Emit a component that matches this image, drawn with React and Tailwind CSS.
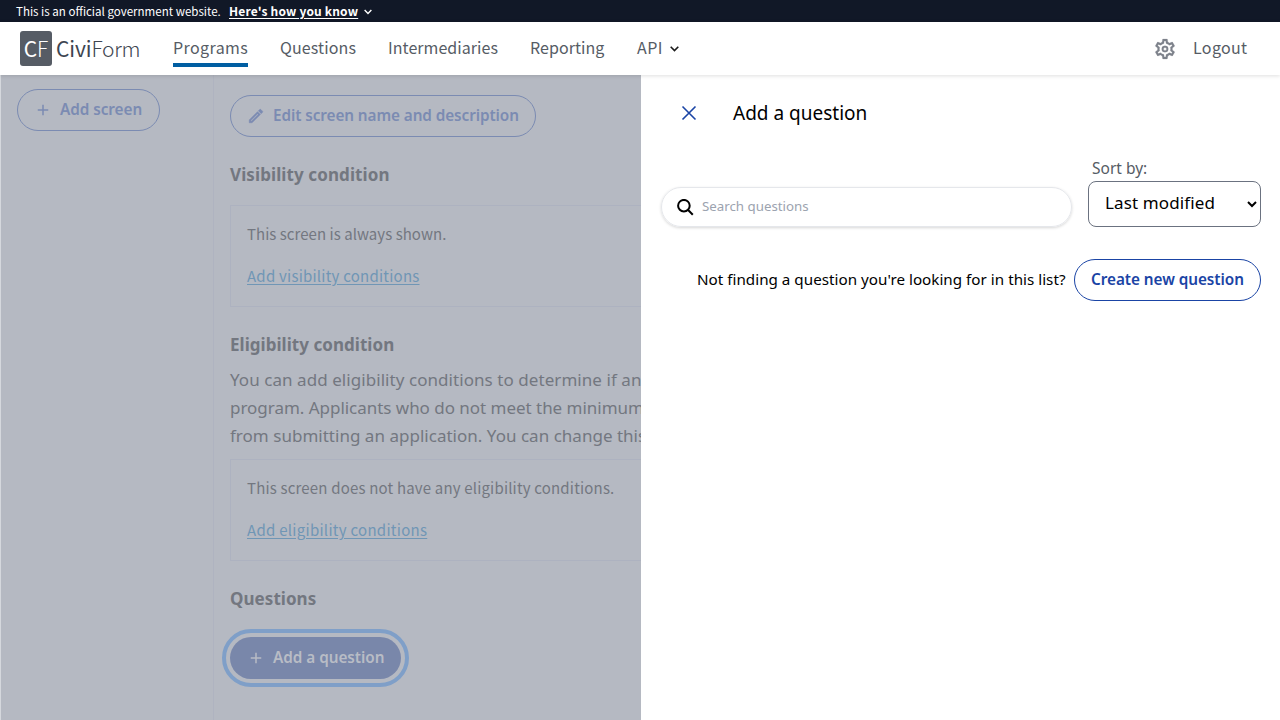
import React from "react";

const source = "font-['Noto_Sans_CJK_SC',sans-serif]";

function Chevron({ className }) {
  return (
    <svg className={className} viewBox="0 0 9 6" fill="none" stroke="currentColor" strokeWidth="1.6">
      <path d="M.7.8 4.5 4.6 8.3.8" />
    </svg>
  );
}

function Plus() {
  return (
    <svg className="h-[18px] w-[18px]" viewBox="0 0 24 24" fill="currentColor">
      <path d="M19 13h-6v6h-2v-6H5v-2h6V5h2v6h6v2z" />
    </svg>
  );
}

function Banner() {
  return (
    <div className={`flex h-[22px] shrink-0 items-center whitespace-nowrap bg-[#111827] pl-4 leading-none text-white ${source}`}>
      <span className="w-[213px] text-[11.56px] leading-[22px]">This is an official government website.</span>
      <a className="w-[129px] text-[12px] leading-[22px] font-bold tracking-[0.17px] underline underline-offset-2">Here's how you know</a>
      <Chevron className="ml-1.5 mt-0.5 h-[6px] w-[8px]" />
    </div>
  );
}

function Header() {
  return (
    <header className={`relative z-10 flex h-[53px] shrink-0 items-center bg-white pl-5 pr-8 text-[16px] whitespace-nowrap text-[#565c65] shadow-[0_1px_4px_rgba(0,0,0,0.13)] ${source}`}>
      <div className="flex h-[35px] w-8 items-center justify-center rounded-[3px] bg-[#565c65] text-[21px] leading-[35px] text-white">
        <span>C</span>
        <span className="font-light">F</span>
      </div>
      <div className="ml-1 flex w-[117px] text-[21px] leading-[35px] text-[#3d4551]">
        <span className="tracking-[-0.1px]">Civi</span>
        <span className="font-light tracking-[-0.3px]">Form</span>
      </div>
      <nav className="flex h-full gap-8 leading-[50px]">
        <a className="relative w-[75px] tracking-[0.4px]">
          Programs
          <span className="absolute bottom-2 left-0 h-1 w-full bg-[#005ea2]" />
        </a>
        <a className="w-[76px] tracking-[0.12px]">Questions</a>
        <a className="w-[110px] tracking-[0.05px]">Intermediaries</a>
        <a className="w-[75px] tracking-[0.05px]">Reporting</a>
        <a className="flex h-[50px] items-center tracking-[0.4px]">
          API
          <Chevron className="mt-[3px] ml-[7px] h-[6px] w-[9px] text-[#1b1b1b]" />
        </a>
      </nav>
      <svg className="ml-auto h-6 w-6" viewBox="0 0 24 24" fill="#7d828b" stroke="#7d828b" strokeWidth="0.2">
        <path d="M19.43 12.98c.04-.32.07-.64.07-.98 0-.34-.03-.66-.07-.98l2.11-1.65c.19-.15.24-.42.12-.64l-2-3.46c-.09-.16-.26-.25-.44-.25-.06 0-.12.01-.17.03l-2.49 1c-.52-.4-1.08-.73-1.69-.98l-.38-2.65C14.46 2.18 14.25 2 14 2h-4c-.25 0-.46.18-.49.42l-.38 2.65c-.61.25-1.17.59-1.69.98l-2.49-1c-.06-.02-.12-.03-.18-.03-.17 0-.34.09-.43.25l-2 3.46c-.13.22-.07.49.12.64l2.11 1.65c-.04.32-.07.65-.07.98 0 .33.03.66.07.98l-2.11 1.65c-.19.15-.24.42-.12.64l2 3.46c.09.16.26.25.44.25.06 0 .12-.01.17-.03l2.49-1c.52.4 1.08.73 1.69.98l.38 2.65c.03.24.24.42.49.42h4c.25 0 .46-.18.49-.42l.38-2.65c.61-.25 1.17-.59 1.69-.98l2.49 1c.06.02.12.03.18.03.17 0 .34-.09.43-.25l2-3.46c.12-.22.07-.49-.12-.64l-2.11-1.65zm-1.98-1.71c.04.31.05.52.05.73 0 .21-.02.43-.05.73l-.14 1.13.89.7 1.08.84-.7 1.21-1.27-.51-1.04-.42-.9.68c-.43.32-.84.56-1.25.73l-1.06.43-.16 1.13-.2 1.35h-1.4l-.19-1.35-.16-1.13-1.06-.43c-.43-.18-.83-.41-1.23-.71l-.91-.7-1.06.43-1.27.51-.7-1.21 1.08-.84.89-.7-.14-1.13c-.03-.31-.05-.54-.05-.74s.02-.43.05-.73l.14-1.13-.89-.7-1.08-.84.7-1.21 1.27.51 1.04.42.9-.68c.43-.32.84-.56 1.25-.73l1.06-.43.16-1.13.2-1.35h1.39l.19 1.35.16 1.13 1.06.43c.43.18.83.41 1.23.71l.91.7 1.06-.43 1.27-.51.7 1.21-1.07.85-.89.7.14 1.13zM12 8.7a3.3 3.3 0 1 0 0 6.6 3.3 3.3 0 0 0 0-6.6zm0 4.8a1.5 1.5 0 1 1 0-3 1.5 1.5 0 0 1 0 3z" />
      </svg>
      <a className="ml-4 w-[55px] self-start leading-[50px] tracking-[0.35px]">Logout</a>
    </header>
  );
}

function ConditionBox({ text, link, textClass, linkClass }) {
  return (
    <div className={`h-[102px] border border-r-0 border-[#adb2c0] px-4 pt-4 text-[15px] leading-6 ${source}`}>
      <p className={textClass}>{text}</p>
      <a className={linkClass}>{link}</a>
    </div>
  );
}

function ScreenEditor() {
  return (
    <div className="flex w-[641px] shrink-0 overflow-hidden border-l border-[#d5d8dd] bg-[#b5b9c2] whitespace-nowrap text-[#737780]">
      <aside className="w-[213px] shrink-0 border-r border-[#afb3c0] pl-4 pt-[14px]">
        <button className="flex h-[42px] w-[143px] items-center rounded-full border border-[#7b8bb2] pl-4 text-[15.3px] font-semibold text-[#7b8bb2]">
          <Plus />
          <span className="ml-2 pb-0.5 tracking-[-0.05px]">Add screen</span>
        </button>
      </aside>
      <main className="grow pl-4 pt-5">
        <button className="flex h-[42px] w-[306px] items-center rounded-full border border-[#7b8bb2] pl-4 text-[15.3px] font-semibold text-[#7b8bb2]">
          <svg className="h-[18px] w-[18px]" viewBox="0 0 24 24" fill="currentColor" stroke="currentColor" strokeWidth="0.7">
            <path d="m14.06 9.02.92.92L5.92 19H5v-.92l9.06-9.06M17.66 3c-.25 0-.51.1-.7.29l-1.83 1.83 3.75 3.75 1.83-1.83c.39-.39.39-1.02 0-1.41l-2.34-2.34c-.2-.2-.45-.29-.71-.29zm-3.6 3.19L3 17.25V21h3.75L17.81 9.94l-3.75-3.75z" />
          </svg>
          <span className="ml-2 pb-0.5 tracking-[-0.08px]">Edit screen name and description</span>
        </button>
        <h2 className="mt-6 text-[17px] leading-7 font-bold tracking-[0.1px]">Visibility condition</h2>
        <div className="mt-4">
          <ConditionBox
            text="This screen is always shown."
            link="Add visibility conditions"
            textClass="tracking-[0.04px]"
            linkClass="mt-[18px] inline-block text-[#7096b5] underline underline-offset-2 tracking-[0.23px]"
          />
        </div>
        <h2 className="mt-6 text-[17px] leading-7 font-bold tracking-[0.04px]">Eligibility condition</h2>
        <p className="mt-[7px] mb-[9px] text-[17px] leading-7">
          <span className="block tracking-[0.06px]">You can add eligibility conditions to determine if an</span>
          <span className="block tracking-[-0.03px]">program. Applicants who do not meet the minimum</span>
          <span className="block tracking-[0.02px]">from submitting an application. You can change this</span>
        </p>
        <ConditionBox
          text="This screen does not have any eligibility conditions."
          link="Add eligibility conditions"
          textClass="tracking-[0.18px]"
          linkClass="mt-[18px] inline-block text-[#7096b5] underline underline-offset-2 tracking-[0.28px]"
        />
        <h2 className="mt-6 text-[17px] leading-7 font-bold tracking-[0.05px]">Questions</h2>
        <button className="mt-6 flex h-[42px] w-[171px] items-center rounded-full bg-[#7987aa] pl-[17px] text-[15.3px] font-semibold text-[#b8bcc5] outline-4 outline-offset-4 outline-[#7f9fc8]">
          <Plus />
          <span className="ml-2 pb-0.5 tracking-[-0.03px]">Add a question</span>
        </button>
      </main>
    </div>
  );
}

function QuestionBank() {
  return (
    <section className="flex grow flex-col whitespace-nowrap bg-white pl-5 pr-[19px] pt-5 text-black">
      <div className="flex h-9 items-center pl-5">
        <svg className="h-4 w-4" viewBox="0 0 16 16" fill="none" stroke="#1a44a5" strokeWidth="1.6">
          <path d="M1.5 1.5 14.5 14.5M14.5 1.5 1.5 14.5" />
        </svg>
        <h1 className="ml-9 text-[19px] leading-9">Add a question</h1>
      </div>
      <div className="mt-[25px] flex items-end gap-4">
        <div className="flex h-10 w-[411px] items-center rounded-full border border-[#e5e7eb] pl-[15px] shadow-[0_1px_3px_rgba(0,0,0,0.16)]">
          <svg className="h-[17px] w-[17px]" viewBox="0 0 17 17" fill="none" stroke="black" strokeWidth="2">
            <circle cx="6.9" cy="6.7" r="5.8" />
            <path d="m11.1 11 4.7 4.7" />
          </svg>
          <span className="ml-2 text-[13.3px] font-normal text-[#9ca3af]">Search questions</span>
        </div>
        <div className="w-[173px]">
          <label className="block pl-1 text-[15.5px] leading-6 text-[#565c65]">Sort by:</label>
          <div className="mt-px flex h-[46px] items-center justify-between rounded-lg border border-[#6b7280] pl-4 pr-[3px] text-[17px]">
            <span className="pb-0.5 tracking-[0.12px]">Last modified</span>
            <svg className="h-[7px] w-[10px]" viewBox="0 0 10 7" fill="none" stroke="black" strokeWidth="2">
              <path d="m1 1 4 4 4-4" />
            </svg>
          </div>
        </div>
      </div>
      <div className="mt-8 flex items-center justify-end gap-2">
        <p className="w-[369px] pb-0.5 text-[15.2px] tracking-[0.02px]">Not finding a question you're looking for in this list?</p>
        <button className="flex h-[42px] w-[187px] items-center justify-center rounded-full border border-[#1a44a5] pb-0.5 text-[15.3px] font-semibold tracking-[-0.05px] text-[#1a44a5]">
          Create new question
        </button>
      </div>
    </section>
  );
}

export default function App() {
  return (
    <div className="flex h-[720px] w-[1280px] flex-col overflow-hidden bg-white font-['Noto_Sans',sans-serif]">
      <Banner />
      <Header />
      <div className="flex min-h-0 grow">
        <ScreenEditor />
        <QuestionBank />
      </div>
    </div>
  );
}
